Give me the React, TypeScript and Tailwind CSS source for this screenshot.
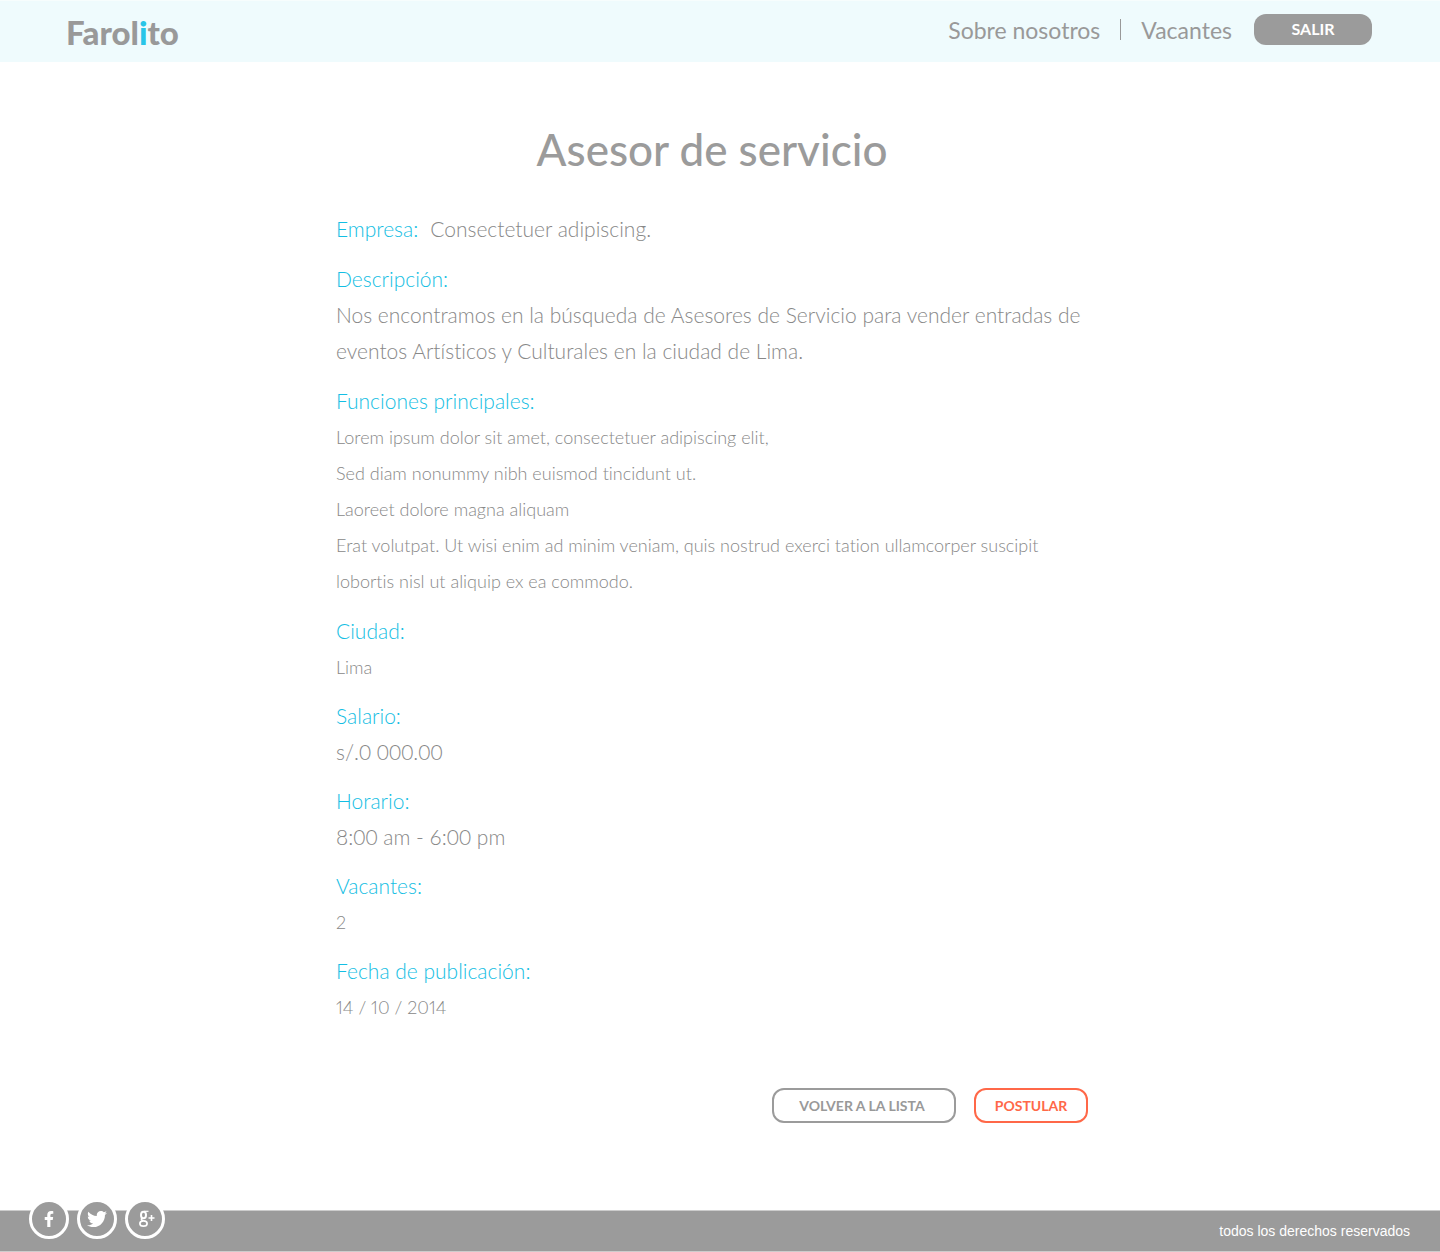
import React from "react";
import { FaFacebookF, FaTwitter } from "react-icons/fa";

const lead = "text-[21px]";
const small = "text-[18px] proportional-nums";

type Detail = { label: string; lines: string[]; size: string };

const overview: Detail[] = [
  {
    label: "Descripción:",
    size: lead,
    lines: [
      "Nos encontramos en la búsqueda de Asesores de Servicio para vender entradas de eventos Artísticos y Culturales en la ciudad de Lima.",
    ],
  },
  {
    label: "Funciones principales:",
    size: small,
    lines: [
      "Lorem ipsum dolor sit amet, consectetuer adipiscing elit,",
      "Sed diam nonummy nibh euismod tincidunt ut.",
      "Laoreet dolore magna aliquam",
      "Erat volutpat. Ut wisi enim ad minim veniam, quis nostrud exerci tation ullamcorper suscipit lobortis nisl ut aliquip ex ea commodo.",
    ],
  },
];

const facts: Detail[] = [
  { label: "Ciudad:", size: small, lines: ["Lima"] },
  { label: "Salario:", size: lead, lines: ["s/.0 000.00"] },
  { label: "Horario:", size: lead, lines: ["8:00 am - 6:00 pm"] },
  { label: "Vacantes:", size: small, lines: ["2"] },
  { label: "Fecha de publicación:", size: small, lines: ["14 / 10 / 2014"] },
];

function Entry({ label, lines, size }: Detail) {
  return (
    <div>
      <dt className="text-[21px] text-[#14bee3]">{label}</dt>
      {lines.map((line) => (
        <dd key={line} className={size}>
          {line}
        </dd>
      ))}
    </div>
  );
}

function GooglePlus() {
  return (
    <svg viewBox="0 0 18 18" className="ml-1 size-[18px]" fill="none" stroke="currentColor" aria-hidden="true">
      <ellipse cx="5.5" cy="5" rx="2.5" ry="3.3" strokeWidth="2" />
      <path d="M6 1.3h4.5" strokeWidth="1.2" />
      <path d="M4.5 8c-1.800 1-1.300 2 .5 2.600" strokeWidth="1.6" />
      <ellipse cx="5.5" cy="13.5" rx="3.6" ry="2.7" strokeWidth="1.7" />
      <path d="M10.5 8h6M13.5 5v6" strokeWidth="1.6" />
    </svg>
  );
}

const social = [
  { name: "Facebook", icon: <FaFacebookF className="size-4" /> },
  { name: "Twitter", icon: <FaTwitter className="size-5" /> },
  { name: "Google+", icon: <GooglePlus /> },
];

export default function App() {
  return (
    <div className="flex min-h-screen flex-col bg-white font-['Lato',sans-serif] text-[#999999] [font-variant-ligatures:none]">
      <header className="flex h-[62px] items-center justify-between border-t border-[#f7fdfd] bg-[#effbfd] pr-[68px] pl-[66px]">
        <a href="#" className="text-[33px] leading-10 font-black">
          Farol<span className="text-[#29c5e8]">i</span>to
        </a>
        <nav className="flex items-center pb-1 text-[23px] leading-8">
          <a href="#">Sobre nosotros</a>
          <span className="mx-[20px] h-[21px] w-px bg-[#999999]" />
          <a href="#">Vacantes</a>
          <button
            type="button"
            className="ml-[22px] h-[31px] w-[118px] rounded-xl bg-[#9b9b9b] pb-0.5 text-base leading-none font-bold text-white"
          >
            SALIR
          </button>
        </nav>
      </header>

      <main className="mx-auto w-full max-w-[768px] flex-1 pr-4 pb-16">
        <h1 className="mt-[62px] text-center text-[44px] leading-[50px] font-medium text-[#9b9b9b]">
          Asesor de servicio
        </h1>
        <div className="mt-[37px] leading-9 font-light text-[#888888]">
          <dl className="flex flex-col gap-3.5">
            <div className="flex gap-3 text-[21px]">
              <dt className="text-[#14bee3]">Empresa:</dt>
              <dd>Consectetuer adipiscing.</dd>
            </div>
            {overview.map((d) => (
              <Entry key={d.label} {...d} />
            ))}
          </dl>
          <dl className="mt-3.5 flex flex-col gap-[13px]">
            {facts.map((d) => (
              <Entry key={d.label} {...d} />
            ))}
          </dl>
        </div>
        <div className="mt-[63px] flex justify-end gap-[18px] text-sm leading-5 font-bold">
          <button type="button" className="h-[35px] w-[184px] rounded-xl border-2 border-[#9b9b9b] pr-1">
            VOLVER A LA LISTA
          </button>
          <button type="button" className="h-[35px] w-[114px] rounded-xl border-2 border-[#ff6848] text-[#ff6848]">
            POSTULAR
          </button>
        </div>
      </main>

      <footer className="flex h-[42px] items-center justify-between border-y border-[#cccccc] bg-[#9b9b9b] pr-[30px] pl-[29px] text-white">
        <ul className="-mt-6 flex gap-2">
          {social.map(({ name, icon }) => (
            <li key={name}>
              <a
                href="#"
                aria-label={name}
                className="flex size-10 items-center justify-center rounded-full border-3 border-white bg-[#9b9b9b]"
              >
                {icon}
              </a>
            </li>
          ))}
        </ul>
        <p className="font-['Liberation_Sans',sans-serif] text-sm">todos los derechos reservados</p>
      </footer>
    </div>
  );
}
